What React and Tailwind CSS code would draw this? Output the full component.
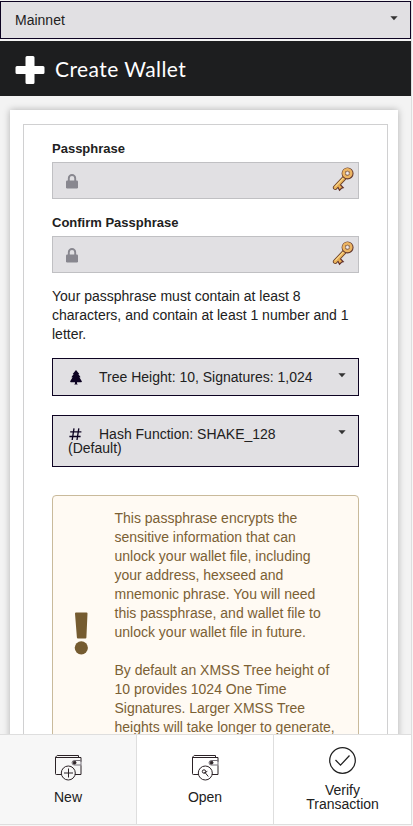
import React from "react";

function Caret({ className = "" }) {
  return (
    <svg className={`shrink-0 ${className}`} width="8" height="5" viewBox="0 0 8 5">
      <path d="M0.4 0.3h7.2L4 4.3z" fill="#333" />
    </svg>
  );
}

function Lock() {
  return (
    <svg width="12" height="15" viewBox="0 0 12 15" fill="none">
      <path d="M2.8 7V4.2a3.2 3.2 0 0 1 6.4 0V7" stroke="#88878f" strokeWidth="1.9" />
      <rect x="0" y="6.4" width="12" height="8" rx="1.2" fill="#88878f" />
    </svg>
  );
}

function Key() {
  return (
    <svg width="22" height="26" viewBox="0 0 22 26" fill="none">
      <path d="M12.6 10.6 3.2 20.6" stroke="#6b4128" strokeWidth="4.6" strokeLinecap="round" />
      <path d="m5.5 19.5 2 3.8 2-2 1.8-.5-3-3.2" fill="#e9ad52" stroke="#5f2f2c" strokeWidth="1.1" />
      <path d="M12.6 10.6 3.2 20.6" stroke="#eab45c" strokeWidth="2.9" strokeLinecap="round" />
      <path d="M11.6 10.8 3.2 19.6" stroke="#ffe5a0" strokeWidth="1" />
      <circle cx="15.6" cy="6.4" r="3.9" stroke="#673c31" strokeWidth="4.2" />
      <circle cx="15.4" cy="6.2" r="3.8" stroke="#ecb563" strokeWidth="2.7" />
      <circle cx="15.4" cy="6.2" r="1.9" fill="#efe9ed" stroke="#9b7859" strokeWidth=".8" />
    </svg>
  );
}

function PassphraseField({ label }) {
  return (
    <label className="block h-[74px]">
      <span className="block h-[24px] pt-px text-[13px] font-bold leading-[19px] text-[#212121]">{label}</span>
      <span className="flex h-[37px] items-start justify-between border border-[#c0c0c3] bg-[#e1e0e3] pl-[13px] pr-[4px]">
        <span className="mt-[11px]"><Lock /></span>
        <span className="mt-[4px]"><Key /></span>
      </span>
    </label>
  );
}

function Tree() {
  return (
    <svg width="12" height="15" viewBox="0 0 12 15" fill="#0d0322">
      <path d="M6 0 9.3 4H8.300l2.300 3.300H9.400l2.400 4c.2.5 0 .9-.6.9H7v1.200l.8 1.200H4.200L5 13.400V12.200H.8c-.6 0-.8-.4-.6-.9l2.400-4H1.400L3.700 4H2.700z" />
    </svg>
  );
}

function Hash() {
  return (
    <svg width="13" height="13" viewBox="0 0 13 13" fill="none" stroke="#0d0322" strokeWidth="1.350">
      <path d="M1.200 3.800h11.200M.4 8.500h11.200M5 .4 3.200 12M9.800.4 8 12" />
    </svg>
  );
}

function Wallet({ children }) {
  return (
    <svg width="28" height="27" viewBox="0 0 28 27" fill="none" stroke="#2b2226" strokeWidth="1">
      <path d="M7.500 20.500h-5.200a.8.8 0 0 1-.8-.8V3.500h25.500v4.200M27 11.200v9.300h-6M1.500 4c0-1 .8-1.800 1.700-2.500h21.300v2" />
      <path d="M27 6.500h-6.700a2 2 0 0 0 0 4.500H27z" stroke="#77727a" />
      <circle cx="20.600" cy="8.700" r="1.400" fill="#2b2226" />
      <circle cx="14.300" cy="19" r="7" />
      {children}
    </svg>
  );
}

export default function App() {
  return (
    <div className="flex h-[826px] w-[413px] flex-col overflow-hidden bg-[#f7f7f7] font-['Liberation_Sans',Arial,sans-serif] text-[14px] text-[#212121]">
      <div className="mr-px flex min-h-0 flex-1 flex-col overflow-hidden border-r border-[#dedede] bg-[#f3f3f3] pt-px">
        <div className="flex h-[38px] shrink-0 items-start justify-between border border-[#0d0322] bg-[#e1e0e3] pl-[14px] pr-[12px] leading-[14px]">
          <span className="mt-[11px]">Mainnet</span>
          <Caret className="mt-[14px]" />
        </div>
        <header className="mt-[2px] flex h-[55px] shrink-0 items-center bg-[#1d1e1f] pl-[15px] text-white">
          <svg className="mt-[3px]" width="30" height="28" viewBox="0 0 30 28" fill="white">
            <path d="M12 0h6a1.500 1.500 0 0 1 1.500 1.500V10H28a1.500 1.500 0 0 1 1.500 1.500v5A1.500 1.500 0 0 1 28 18h-8.500v8.500A1.500 1.500 0 0 1 18 28h-6a1.500 1.500 0 0 1-1.500-1.500V18H2a1.500 1.500 0 0 1-1.500-1.500v-5A1.500 1.500 0 0 1 2 10h8.500V1.500A1.500 1.500 0 0 1 12 0z" />
          </svg>
          <h1 className="ml-[10px] whitespace-nowrap font-['Lato',sans-serif] text-[21px] font-normal leading-[28px] tracking-[0.42px]">Create Wallet</h1>
        </header>
        <main className="ml-[10px] mr-[13px] mt-[14px] h-[900px] shrink-0 bg-white pl-[13px] pr-[10px] pt-[14px] shadow-[0_0_7px_rgba(0,0,0,0.28)]">
          <div className="h-[880px] border border-[#d0d0d1] bg-white px-[28px] pt-[13px]">
            <PassphraseField label="Passphrase" />
            <PassphraseField label="Confirm Passphrase" />
            <p className="h-[72px] whitespace-nowrap pt-px leading-[19px]">
              Your passphrase must contain at least 8<br />characters, and contain at least 1 number and 1<br />letter.
            </p>
            <div className="flex h-[38px] items-start border border-[#0d0322] bg-[#e1e0e3] pr-[12px] leading-[14px]">
              <span className="ml-[17px] mt-[11px]"><Tree /></span>
              <span className="ml-[17px] mt-[11px] flex-1 whitespace-nowrap">Tree Height: 10, Signatures: 1,024</span>
              <Caret className="mt-[14px]" />
            </div>
            <div className="mt-[19px] flex h-[52px] items-start border border-[#0d0322] bg-[#e1e0e3] pl-[15px] pr-[12px] leading-[14px]">
              <div className="flex-1">
                <div className="mt-[11px] flex h-[14px]">
                  <span className="ml-px mt-px"><Hash /></span>
                  <span className="ml-[17px]">Hash Function: SHAKE_128</span>
                </div>
                <div>(Default)</div>
              </div>
              <Caret className="mt-[14px]" />
            </div>
            <div className="mt-[28px] flex h-[380px] rounded-[4px] border border-[#c9ba9b] bg-[#fffaf3] text-[#7b6033]">
              <svg className="ml-[21px] mt-[116px] shrink-0" width="15" height="43" viewBox="0 0 15 43" fill="#755b30">
                <path d="M2 0.500h10.500q1 0 1 1l-1.100 24q0 1-1 1H3.900q-1 0-1-1L1 1.500q0-1 1-1z" />
                <circle cx="7.300" cy="35.800" r="6.600" />
              </svg>
              <div className="ml-[25.500px] mt-[13px] whitespace-nowrap leading-[19px]">
                <p>This passphrase encrypts the<br />sensitive information that can<br />unlock your wallet file, including<br />your address, hexseed and<br />mnemonic phrase. You will need<br />this passphrase, and wallet file to<br />unlock your wallet file in future.</p>
                <p className="mt-[19px]">By default an XMSS Tree height of<br />10 provides 1024 One Time<br />Signatures. Larger XMSS Tree<br />heights will take longer to generate,</p>
              </div>
            </div>
          </div>
        </main>
      </div>
      <nav className="mb-px mr-px grid h-[91px] shrink-0 grid-cols-[137px_137px_138px] border-y border-[#dedede] bg-white text-center leading-[14px]">
        <div className="flex flex-col items-center border-r border-[#dedede] bg-[#f7f7f7] pt-[19px]">
          <Wallet><path d="M14.500 14.500v9M10 19h9" /></Wallet>
          <span className="mt-[9px]">New</span>
        </div>
        <div className="flex flex-col items-center border-r border-[#dedede] pt-[19px]">
          <Wallet><circle cx="13" cy="17.500" r="1.700" /><path d="m14 18.500 3.300 4M13.300 19l3-1.700" /></Wallet>
          <span className="mt-[9px]">Open</span>
        </div>
        <div className="flex flex-col items-center border-r border-[#dedede] pt-[12px]">
          <svg width="28" height="28" viewBox="0 0 28 28" fill="none" stroke="#212121" strokeWidth="1.250">
            <circle cx="13.500" cy="13.500" r="12.800" />
            <path d="m6.500 13 5 5.200 9-9.700" />
          </svg>
          <span className="mt-[8px]">Verify<br />Transaction</span>
        </div>
      </nav>
    </div>
  );
}
